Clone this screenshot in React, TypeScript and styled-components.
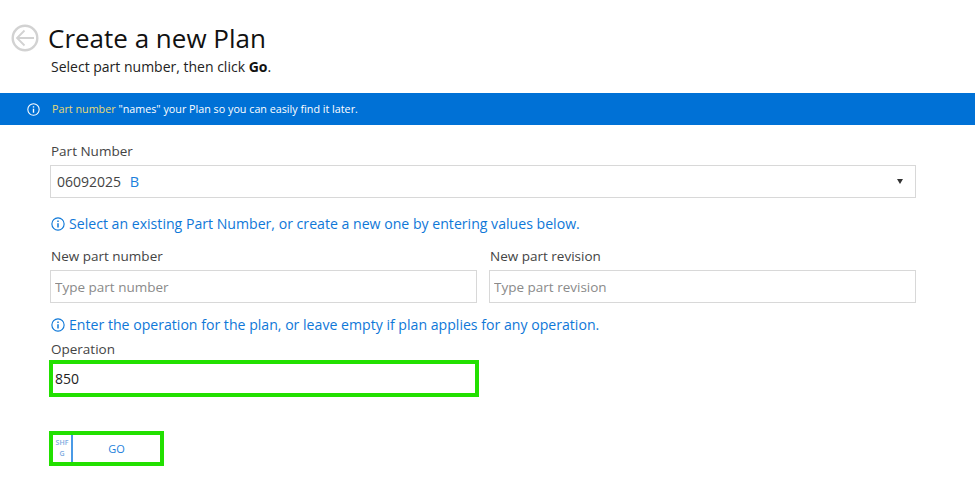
import styled, { createGlobalStyle } from "styled-components";

const GlobalStyle = createGlobalStyle`
  html, body {
    margin: 0;
    padding: 0;
    background: #fff;
    font-family: "Open Sans", "Noto Sans", sans-serif;
  }
`;

const InfoIcon = ({ size }: { size: number }) => (
  <svg width={size} height={size} viewBox="0 0 16 16" fill="none" stroke="currentColor" strokeWidth="1.3">
    <circle cx="8" cy="8" r="7" />
    <line x1="8" y1="7" x2="8" y2="12" strokeWidth="1.7" />
    <line x1="8" y1="4" x2="8" y2="5.6" strokeWidth="1.7" />
  </svg>
);

const App = () => (
  <Page>
    <GlobalStyle />
    <Header>
      <BackIcon width="28" height="28" viewBox="0 0 28 28" fill="none" stroke="#d2d2d2">
        <circle cx="14" cy="14" r="12.3" strokeWidth="2.4" />
        <path d="M23 14H6.5M13.5 6.5L6 14l7.5 7.5" strokeWidth="1.8" />
      </BackIcon>
      <div>
        <Title>Create a new Plan</Title>
        <Subtitle>
          Select part number, then click <b>Go</b>.
        </Subtitle>
      </div>
    </Header>

    <Banner>
      <InfoIcon size={13} />
      <span>
        <Accent>Part number</Accent> "names" your Plan so you can easily find it later.
      </span>
    </Banner>

    <Form>
      <Label>Part Number</Label>
      <SelectBox>
        <span>
          06092025 <Revision>B</Revision>
        </span>
        <Caret />
      </SelectBox>

      <Hint $top={16}>
        <InfoIcon size={14} />
        Select an existing Part Number, or create a new one by entering values below.
      </Hint>

      <Columns>
        <div>
          <Label>New part number</Label>
          <TextInput placeholder="Type part number" />
        </div>
        <div>
          <Label>New part revision</Label>
          <TextInput placeholder="Type part revision" />
        </div>
      </Columns>

      <Hint $top={12}>
        <InfoIcon size={14} />
        Enter the operation for the plan, or leave empty if plan applies for any operation.
      </Hint>

      <OperationLabel>Operation</OperationLabel>
      <OperationInput defaultValue="850" />

      <GoButton type="button">
        <Shortcut>
          SHF
          <br />G
        </Shortcut>
        <GoText>GO</GoText>
      </GoButton>
    </Form>
  </Page>
);
export default App;

const Page = styled.div`
  width: 975px;
  height: 484px;
  overflow: hidden;
  background: #fff;
`;

const Header = styled.header`
  display: flex;
  gap: 9px;
  padding: 22px 0 0 11px;
  height: 71px;
  box-sizing: border-box;
`;

const BackIcon = styled.svg`
  flex: none;
  margin-top: 2px;
`;

const Title = styled.h1`
  margin: 0;
  font-size: 26px;
  font-weight: 400;
  line-height: 33px;
  color: #111;
`;

const Subtitle = styled.p`
  margin: 0 0 0 3px;
  font-size: 14px;
  line-height: 24px;
  color: #222;
  b {
    font-weight: 700;
    color: #111;
  }
`;

const Banner = styled.div`
  display: flex;
  align-items: center;
  gap: 12px;
  height: 32px;
  margin-top: 22px;
  padding-left: 27px;
  background: #0071d6;
  color: #fff;
  font-size: 10.75px;
`;

const Accent = styled.span`
  color: #e6d977;
`;

const Form = styled.main`
  width: 866px;
  margin-left: 50px;
  padding-top: 17px;
`;

const Label = styled.div`
  font-size: 13.5px;
  line-height: 19px;
  color: #444;
  margin-bottom: 4px;
  padding-left: 1px;
`;

const SelectBox = styled.div`
  display: flex;
  align-items: center;
  justify-content: space-between;
  box-sizing: border-box;
  height: 33px;
  padding: 0 12px 0 6px;
  border: 1px solid #d8d8d8;
  font-size: 14px;
  color: #444;
`;

const Revision = styled.span`
  margin-left: 5px;
  font-size: 14.5px;
  color: #1c7fdc;
`;

const Caret = styled.i`
  width: 0;
  height: 0;
  border-left: 3.5px solid transparent;
  border-right: 3.5px solid transparent;
  border-top: 5px solid #333;
`;

const Hint = styled.div<{ $top: number }>`
  display: flex;
  align-items: center;
  gap: 4px;
  margin-top: ${({ $top }) => $top}px;
  font-size: 14.12px;
  line-height: 19px;
  color: #0f78d8;
  svg {
    margin-left: 1px;
  }
`;

const Columns = styled.div`
  display: grid;
  grid-template-columns: 427px 427px;
  gap: 12px;
  margin-top: 14px;
`;

const TextInput = styled.input`
  display: block;
  box-sizing: border-box;
  width: 100%;
  height: 33px;
  padding: 0 4px;
  border: 1px solid #d8d8d8;
  outline: none;
  font: 13.5px "Open Sans", sans-serif;
  &::placeholder {
    color: #8a8a8a;
    opacity: 1;
  }
`;

const OperationLabel = styled(Label)`
  margin: 6px 0 1px;
`;

const OperationInput = styled.input`
  display: block;
  box-sizing: border-box;
  width: 430px;
  height: 37px;
  margin-left: -1px;
  padding: 0 2px;
  border: 4px solid #22e000;
  outline: none;
  font: 14px "Open Sans", sans-serif;
  color: #222;
`;

const GoButton = styled.button`
  display: flex;
  box-sizing: border-box;
  width: 115px;
  height: 35px;
  margin: 34px 0 0 -1px;
  padding: 0;
  border: 4px solid #22e000;
  background: #fff;
  color: #1c7fdc;
  font-family: "Open Sans", sans-serif;
`;

const Shortcut = styled.span`
  flex: none;
  box-sizing: border-box;
  width: 20px;
  height: 100%;
  padding-top: 2px;
  border-right: 2px solid #4a9ae6;
  font-size: 7px;
  font-weight: 600;
  line-height: 11px;
  text-align: center;
  color: #7aa9e0;
`;

const GoText = styled.span`
  flex: 1;
  font-size: 11px;
  line-height: 27px;
  text-align: center;
`;
